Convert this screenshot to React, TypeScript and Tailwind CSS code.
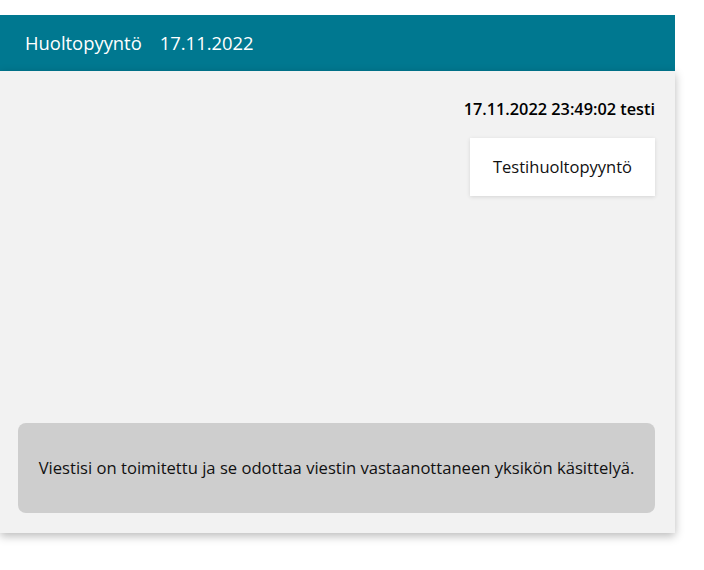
export default function App() {
  return (
    <div
      className="w-[704px] h-[570px] bg-white overflow-hidden pt-[15px]"
      style={{ fontFamily: '"Open Sans", "Noto Sans", sans-serif' }}
    >
      <div className="w-[675px]">
        {/* header */}
        <div className="h-[56px] bg-[#007890] flex items-center pl-[25px] gap-[18px] text-white text-[18.4px]">
          <span>Huoltopyyntö</span>
          <span>17.11.2022</span>
        </div>

        {/* message panel */}
        <div className="h-[462px] bg-[#f2f2f2] shadow-[0_3px_9px_rgba(0,0,0,0.28)] flex flex-col pt-[27px] pl-[18px] pr-[20px] pb-[20px]">
          <div className="flex flex-col items-end">
            <div className="text-[16.3px] leading-[22px] font-semibold text-black">17.11.2022 23:49:02 testi</div>
            <div className="mt-[18px] w-[185px] h-[58px] bg-white shadow-[0_1px_4px_rgba(0,0,0,0.12)] flex items-center justify-center text-[16.5px] text-[#111]">
              Testihuoltopyyntö
            </div>
          </div>

          <div className="mt-auto h-[90px] bg-[#cecece] rounded-[8px] flex items-center justify-center text-[16.6px] text-[#111]">
            Viestisi on toimitettu ja se odottaa viestin vastaanottaneen yksikön käsittelyä.
          </div>
        </div>
      </div>
    </div>
  );
}
